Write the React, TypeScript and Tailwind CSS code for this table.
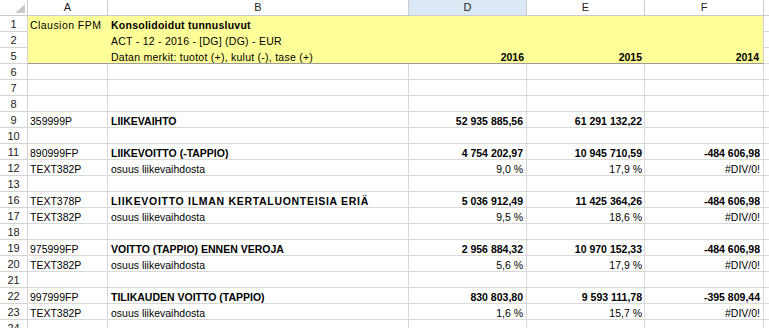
import React from "react";

type Row = {
    n: string;
    a?: string;
    b?: string;
    bold?: boolean;
    wide?: boolean;
    d?: string;
    e?: string;
    f?: string;
};

const ROWS: Row[] = [
    { n: "6" },
    { n: "7" },
    { n: "8" },
    { n: "9", a: "359999P", b: "LIIKEVAIHTO", bold: true, d: "52 935 885,56", e: "61 291 132,22", f: "" },
    { n: "10" },
    { n: "11", a: "890999FP", b: "LIIKEVOITTO (-TAPPIO)", bold: true, d: "4 754 202,97", e: "10 945 710,59", f: "-484 606,98" },
    { n: "12", a: "TEXT382P", b: "osuus liikevaihdosta", d: "9,0 %", e: "17,9 %", f: "#DIV/0!" },
    { n: "13" },
    { n: "16", a: "TEXT378P", b: "LIIKEVOITTO ILMAN KERTALUONTEISIA ERIÄ", bold: true, wide: true, d: "5 036 912,49", e: "11 425 364,26", f: "-484 606,98" },
    { n: "17", a: "TEXT382P", b: "osuus liikevaihdosta", d: "9,5 %", e: "18,6 %", f: "#DIV/0!" },
    { n: "18" },
    { n: "19", a: "975999FP", b: "VOITTO (TAPPIO) ENNEN VEROJA", bold: true, d: "2 956 884,32", e: "10 970 152,33", f: "-484 606,98" },
    { n: "20", a: "TEXT382P", b: "osuus liikevaihdosta", d: "5,6 %", e: "17,9 %", f: "#DIV/0!" },
    { n: "21" },
    { n: "22", a: "997999FP", b: "TILIKAUDEN VOITTO (TAPPIO)", bold: true, d: "830 803,80", e: "9 593 111,78", f: "-395 809,44" },
    { n: "23", a: "TEXT382P", b: "osuus liikevaihdosta", d: "1,6 %", e: "15,7 %", f: "#DIV/0!" },
    { n: "24" },
];

const rowHead = "w-[28px] shrink-0 h-4 flex items-end justify-center leading-[13px] text-[11px] text-[#222] border-r border-b border-[#d4d4d4] bg-white";
const cell = "h-4 shrink-0 flex items-end leading-[11px] border-r border-b border-[#d9d9d9] whitespace-nowrap overflow-visible";

function ColHeader({ label, w, sel }: { label: string; w: string; sel?: boolean }) {
    return (
        <div className={`${w} shrink-0 h-4 flex items-center justify-center text-[11px] text-[#222] border-r border-b border-[#c8ccd2] ${sel ? "bg-[#dce8f4]" : "bg-white"}`}>
            {label}
        </div>
    );
}

export default function App() {
    return (
        <div className="w-[769px] h-[328px] overflow-hidden bg-white text-black" style={{ fontFamily: '"Liberation Sans", Arial, sans-serif' }}>
            {/* column headers */}
            <div className="flex">
                <div className="w-[28px] shrink-0 h-4 border-r border-b border-[#c8ccd2] bg-white flex items-end justify-end p-[2px]">
                    <svg width="10" height="9" viewBox="0 0 10 9">
                        <polygon points="10,0 10,9 0,9" fill="#c9c9c9" />
                    </svg>
                </div>
                <ColHeader label="A" w="w-[80px]" />
                <ColHeader label="B" w="w-[301px]" />
                <ColHeader label="D" w="w-[118px]" sel />
                <ColHeader label="E" w="w-[118px]" />
                <ColHeader label="F" w="w-[119px]" />
                <div className="flex-1 h-4 border-b border-[#c8ccd2] bg-white" />
            </div>

            {/* yellow title block */}
            <div className="flex">
                <div className="flex flex-col">
                    <div className={rowHead}>1</div>
                    <div className={rowHead}>2</div>
                    <div className={rowHead}>5</div>
                </div>
                <div className="w-[736px] shrink-0 bg-[#ffff99] border-r border-b border-r-[#d0d0d0] border-b-[#9c9c9c] text-[10.5px] flex">
                    <div className="w-[80px] shrink-0 flex flex-col">
                        <div className="h-4 flex items-end leading-[11px] pl-[2px] pb-[1px] tracking-[0.45px]">Clausion FPM</div>
                    </div>
                    <div className="w-[301px] shrink-0 flex flex-col pl-[3px] tracking-[0.25px]">
                        <div className="h-4 flex items-end leading-[11px] pb-[1px] font-bold">Konsolidoidut tunnusluvut</div>
                        <div className="h-4 flex items-end leading-[11px] pb-[1px]">ACT - 12 - 2016 - [DG] (DG) - EUR</div>
                        <div className="h-[15px] flex items-end leading-[11px]">Datan merkit: tuotot (+), kulut (-), tase (+)</div>
                    </div>
                    <div className="flex-1 flex flex-col justify-end">
                        <div className="h-[15px] flex items-end leading-[11px] font-bold">
                            <div className="w-[118px] text-right pr-[3px]">2016</div>
                            <div className="w-[118px] text-right pr-[3px]">2015</div>
                            <div className="w-[117px] text-right pr-[3px]">2014</div>
                        </div>
                    </div>
                </div>
                <div className="flex-1 flex flex-col">
                    <div className="h-4 border-b border-[#d9d9d9]" />
                    <div className="h-4 border-b border-[#d9d9d9]" />
                    <div className="h-4 border-b border-[#d9d9d9]" />
                </div>
            </div>

            {/* data rows */}
            {ROWS.map((r) => (
                <div key={r.n} className="flex text-[10.5px]">
                    <div className={rowHead}>{r.n}</div>
                    <div className={`${cell} w-[80px] pl-[2px]`}>{r.a}</div>
                    <div className={`${cell} w-[301px] pl-[3px] ${r.bold ? "font-bold" : ""} ${r.wide ? "tracking-[0.7px]" : ""}`}>{r.b}</div>
                    <div className={`${cell} w-[118px] justify-end pr-[3px] ${r.bold ? "font-bold" : ""}`}>{r.d}</div>
                    <div className={`${cell} w-[118px] justify-end pr-[2px] ${r.bold ? "font-bold" : ""}`}>{r.e}</div>
                    <div className={`${cell} w-[119px] justify-end pr-[3px] ${r.bold ? "font-bold" : ""}`}>{r.f}</div>
                    <div className="flex-1 h-4 border-b border-[#d9d9d9]" />
                </div>
            ))}
        </div>
    );
}
